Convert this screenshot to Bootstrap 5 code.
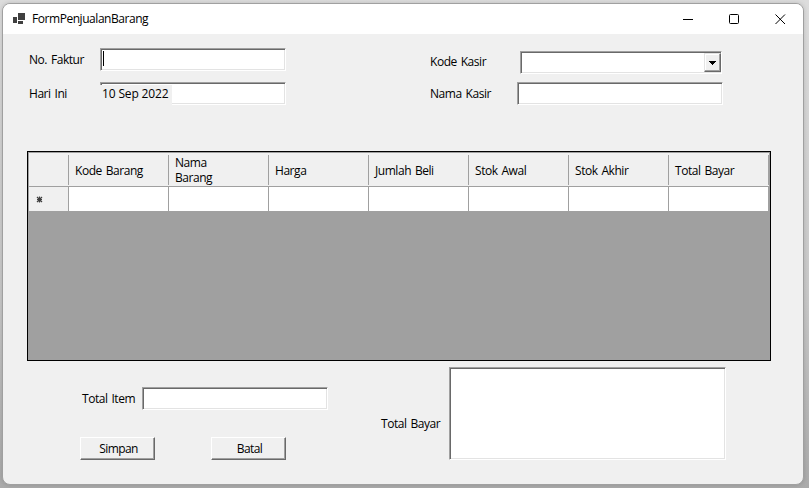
<!DOCTYPE html>
<html lang="id">
<head>
<meta charset="utf-8">
<title>FormPenjualanBarang</title>
<link href="https://cdn.jsdelivr.net/npm/bootstrap@5.3.0/dist/css/bootstrap.min.css" rel="stylesheet">
<style>
html,body{height:100%}
body{font:12px/15px "Open Sans","Noto Sans",sans-serif;letter-spacing:-.45px;word-spacing:1.2px;color:#000;background:linear-gradient(#dcdcdc,#c8c8c8 60%,#aaa);padding:3px 5px 3px 2px;overflow:hidden}
.win{width:802px;height:482px;border:1px solid #a0a0a0;border-radius:8px;background:#f0f0f0;box-shadow:0 0 4px rgba(0,0,0,.15)}
.titlebar{height:30px;background:#fff;padding:0 17px 0 10px}
.titlebar .caption{margin:-1px 0 0 6px}
.tools{gap:35px}
.sunken{background:#fff;height:23px;border:1px solid;border-color:#a0a0a0 #fff #fff #a0a0a0;box-shadow:inset 1px 1px #696969,inset -1px -1px #e3e3e3}
.w-std{width:186px}
.raised{background:#f0f0f0;color:#000;border:1px solid;border-color:#fff #696969 #696969 #fff;box-shadow:inset -1px -1px #a0a0a0}
.head-fields{height:117px;padding:14px 80px 0 26px}
.lbl-a{width:71px}
.lbl-b{width:87px}
.kode{margin-top:-2px}
.caret{width:1px;height:15px;background:#000;margin:2px 0 0 2px}
.today{width:72px;height:20px;background:#f0f0f0;margin:2px 0 0 -1px;padding:1px 0 0 2px;letter-spacing:-.15px;word-spacing:0}
.combo{width:202px;margin-left:3px;padding:1px 0}
.drop{width:17px;height:19px;border-color:#e3e3e3 #696969 #696969 #e3e3e3;box-shadow:inset -1px -1px #a0a0a0,inset 1px 1px #fff}
.grid-view{width:744px;height:210px;margin-left:24px;background:#a0a0a0;border:1px solid #000;padding:1px 0 0 1px}
.hrow{width:740px;height:34px;background:#f0f0f0;border-bottom:1px solid #a0a0a0;padding:2px 0 1px}
.hcell{width:100px;padding:0 6px;border-right:1px solid #a0a0a0}
.hrow>.hcell:first-child,.drow>.cell:first-child{width:40px}
.drow{width:740px;height:24px}
.cell{width:100px;background:#fff;border-right:1px solid #a0a0a0}
.drow>.cell:first-child{background:#f0f0f0;padding:1px 0 0 7px}
.foot{padding:6px 77px 0 77px}
.foot-left{padding-top:20px}
.item-lbl{width:60px;margin-left:2px}
.push{width:75px;height:23px;letter-spacing:-.6px}
.push span{padding-left:2px}
.gap-btn{gap:56px;margin-top:27px}
.memo{width:277px;height:93px}
.total-lbl{width:68px;padding-top:49px}
</style>
<script src="https://cdn.jsdelivr.net/npm/bootstrap@5.3.0/dist/js/bootstrap.bundle.min.js"></script>
</head>
<body>
<div class="win d-flex flex-column overflow-hidden">
  <header class="titlebar d-flex align-items-center justify-content-between">
    <div class="d-flex align-items-center">
      <svg width="13" height="12" shape-rendering="crispEdges" fill="#404040"><path d="M5 0h7v7H5zM0 4h4v6H0zM5 8h5v3H5z"/></svg>
      <span class="caption">FormPenjualanBarang</span>
    </div>
    <div class="tools d-flex align-items-center">
      <svg width="11" height="11"><path d="M0 5.5h10" stroke="#000"/></svg>
      <svg width="11" height="11"><rect x=".5" y=".5" width="9" height="9" rx="1" fill="none" stroke="#000"/></svg>
      <svg width="11" height="11"><path d="M.5.5l9.5 9.5M10 .5L.5 10" stroke="#000"/></svg>
    </div>
  </header>
  <section class="head-fields d-flex justify-content-between">
    <div class="d-flex flex-column">
      <div class="d-flex align-items-center"><label class="lbl-a">No. Faktur</label><div class="sunken w-std"><div class="caret"></div></div></div>
      <div class="d-flex align-items-center" style="margin-top:11px"><label class="lbl-a">Hari Ini</label><div class="sunken w-std"><div class="today">10 Sep 2022</div></div></div>
    </div>
    <div class="d-flex flex-column" style="padding-top:3px">
      <div class="d-flex align-items-center"><label class="lbl-b kode">Kode Kasir</label>
        <div class="sunken combo d-flex justify-content-end"><div class="drop raised d-flex align-items-center justify-content-center"><svg width="7" height="4" shape-rendering="crispEdges"><path d="M0 0h7v1H6v1H5v1H4v1H3V3H2V2H1V1H0z"/></svg></div></div></div>
      <div class="d-flex align-items-center mt-2"><label class="lbl-b">Nama Kasir</label><div class="sunken" style="width:206px"></div></div>
    </div>
  </section>
  <section class="grid-view">
    <div class="hrow d-flex">
      <div class="hcell"></div>
      <div class="hcell d-flex align-items-center">Kode Barang</div>
      <div class="hcell d-flex align-items-center"><span>Nama<br>Barang</span></div>
      <div class="hcell d-flex align-items-center">Harga</div>
      <div class="hcell d-flex align-items-center">Jumlah Beli</div>
      <div class="hcell d-flex align-items-center">Stok Awal</div>
      <div class="hcell d-flex align-items-center">Stok Akhir</div>
      <div class="hcell d-flex align-items-center">Total Bayar</div>
    </div>
    <div class="drow d-flex">
      <div class="cell d-flex align-items-center"><svg width="7" height="7"><path d="M3.5.5v6M1 3.5h5M1 1l5 5M6 1L1 6" stroke="#404040" stroke-width="1.2"/></svg></div>
      <div class="cell"></div><div class="cell"></div><div class="cell"></div><div class="cell"></div><div class="cell"></div><div class="cell"></div><div class="cell"></div>
    </div>
  </section>
  <section class="foot d-flex justify-content-between">
    <div class="foot-left">
      <div class="d-flex align-items-center"><label class="item-lbl">Total Item</label><div class="sunken w-std"></div></div>
      <div class="d-flex gap-btn"><button class="raised push p-0"><span>Simpan</span></button><button class="raised push p-0"><span>Batal</span></button></div>
    </div>
    <div class="d-flex"><label class="total-lbl">Total Bayar</label><div class="sunken memo"></div></div>
  </section>
</div>
</body>
</html>
